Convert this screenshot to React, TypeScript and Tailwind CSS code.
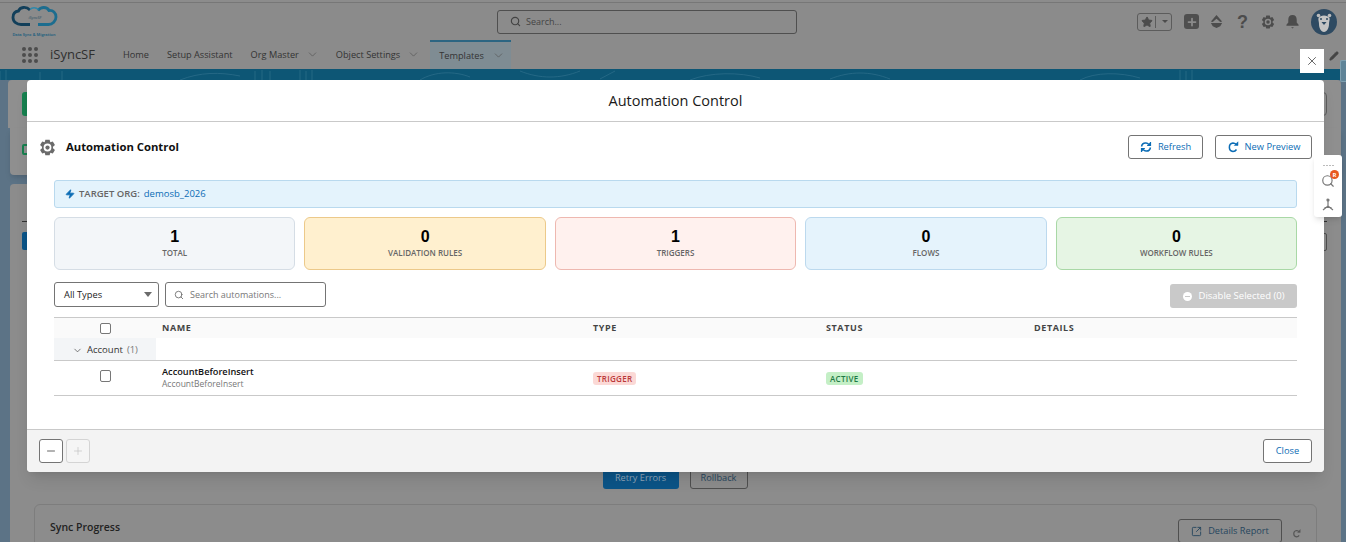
import React from 'react';
import { Search, ChevronDown, Star, X, Pencil, Zap, Minus, Plus, SquareArrowOutUpRight } from 'lucide-react';

const stats = [
  { label: 'TOTAL', val: 1, box: 'bg-[#f3f6f9] border-[#d5dde5]' },
  { label: 'VALIDATION RULES', val: 0, box: 'bg-[#fff0cf] border-[#ecc98a]' },
  { label: 'TRIGGERS', val: 1, box: 'bg-[#fff1ee] border-[#eeb8b0]' },
  { label: 'FLOWS', val: 0, box: 'bg-[#e5f3fc] border-[#bcd9ee]' },
  { label: 'WORKFLOW RULES', val: 0, box: 'bg-[#e6f5e4] border-[#a9d8a6]' },
];

const Gear = ({ className }: { className: string }) => (
  <svg viewBox="0 0 24 24" className={className} fill="currentColor">
    <path fillRule="evenodd" d="M9 1h6l1 3.500 3.500-1 3 5-2.700 2.500v2l2.700 2.500-3 5-3.500-1L15 23H9l-1-3.500-3.500 1-3-5L4.200 13v-2L1.500 8.500l3-5 3.500 1zM12 6.500a5.500 5.500 0 1 0 0 11 5.500 5.500 0 0 0 0-11z" />
    <circle cx="12" cy="12" r="3" />
  </svg>
);

const Logo = () => (
  <svg viewBox="0 0 48 33" className="h-[33px] w-[48px]" fill="none">
    <path d="M19 5C15 1 9 2 7.500 6 3.500 6.500 2 9.500 2 12.500 2 17 6 19.500 10 19.500h9" stroke="#123f5a" strokeWidth="2.800" />
    <path d="M27 5.500c3-4 9-4 11 0 4-.5 7 2.500 7 6.500s-3.500 7.500-7.500 7.500H27" stroke="#1c6d8f" strokeWidth="2.800" />
    <path d="M19 4.500c2-2.500 6-2.500 8.500 0" stroke="#2f88ab" strokeWidth="1.500" />
    <text x="24" y="14" fontSize="4" fontStyle="italic" fill="#2b4f63" textAnchor="middle">iSyncSF</text>
    <text x="23" y="30.500" fontSize="3.900" fontWeight="700" fill="#2d6480" textAnchor="middle">Data Sync &amp; Migration</text>
  </svg>
);

const Bear = () => (
  <svg viewBox="0 0 26 26" className="h-[26px] w-[26px]">
    <circle cx="13" cy="13" r="13" fill="#2e4a62" />
    <circle cx="7.500" cy="6.500" r="1.800" fill="#bdbdbd" />
    <circle cx="18.500" cy="6.500" r="1.800" fill="#bdbdbd" />
    <path d="M7.500 9c1-1.500 3-2.500 5.500-2.500S17.500 7.500 18.500 9c.5 2-.5 3.500-.5 6 0 4-2 8-5 8s-5-4-5-8c0-2.500-1-4-.5-6z" fill="#c4c4c4" />
    <circle cx="10" cy="10" r="1" fill="#2e4a62" />
    <circle cx="16" cy="10" r="1" fill="#2e4a62" />
    <path d="M10.500 13h5l-2.500 3z" fill="#2e4a62" />
  </svg>
);

const RefreshIcon = () => (
  <svg viewBox="0 0 12 12" className="h-[12px] w-[12px]" fill="none" stroke="#0b6cb5" strokeWidth="1.500">
    <path d="M1.500 5.500C2 3 4 1.800 6 2c1.200.1 2 .6 2.800 1.500" />
    <path d="M10.500 6.500C10 9 8 10.200 6 10c-1.200-.1-2-.6-2.800-1.500" />
    <path d="M10.500 1v3.500H7.200M1.500 11V7.500h3.300" strokeWidth="1.200" fill="#0b6cb5" />
  </svg>
);

const RotateIcon = () => (
  <svg viewBox="0 0 12 12" className="h-[12px] w-[12px]" fill="none" stroke="#0b6cb5" strokeWidth="1.500">
    <path d="M9.500 8.500C8.700 9.800 7.500 10.500 6 10.500A4.300 4.300 0 0 1 6 2c1.300 0 2.300.5 3.200 1.400" />
    <path d="M11 .8v3.700H7.300z" fill="#0b6cb5" strokeWidth=".5" />
  </svg>
);

const Stat = ({ label, val, box }: { label: string; val: number; box: string }) => (
  <div className={`flex h-[53px] flex-1 flex-col items-center rounded-[6px] border pt-[9px] ${box}`}>
    <div className="font-['Liberation_Sans',sans-serif] text-[16px] leading-[20px] font-bold text-black">{val}</div>
    <div className="text-[8px] leading-[12px] font-semibold text-[#666]">{label}</div>
  </div>
);

const App: React.FC = () => {
  return (
    <div className="relative h-[542px] w-full overflow-hidden bg-[#5c7386] font-['Open_Sans',sans-serif] text-[#3a3a3a]">
      {/* dimmed page behind the modal */}
      <div className="h-[3px] border-b border-[#777] bg-[#8c8c8c]" />
      <header className="flex h-[37px] items-center bg-[#8b8b8b] pr-[9px] pl-[11px]">
        <Logo />
        <div className="ml-[438px] flex h-[24px] w-[300px] items-center rounded-[3px] border border-[#4f4f4f] pl-[12px] text-[#444]">
          <Search size={11} strokeWidth={2.500} />
          <span className="ml-[5px] text-[9px]">Search...</span>
        </div>
        <div className="ml-auto flex items-center gap-[10px] text-[#4c4c4c]">
          <div className="flex h-[18px] w-[35px] items-center rounded-[3px] border border-[#5c5c5c]">
            <span className="flex w-[18px] justify-center border-r border-[#5c5c5c]"><Star size={12} fill="currentColor" /></span>
            <span className="ml-[6px] h-0 w-0 border-x-[3px] border-t-[3px] border-x-transparent border-t-[#4c4c4c]" />
          </div>
          <span className="ml-[2px] flex h-[15px] w-[15px] items-center justify-center rounded-[3px] bg-[#4f4f4f] text-[#8b8b8b]"><Plus size={12} strokeWidth={3.500} /></span>
          <svg viewBox="0 0 16 16" className="h-[15px] w-[15px]" fill="currentColor"><path d="M8 1l6 7-2 .500L8 5 4 8.500 2 8zM2 9.500h12L12 13l-4 2-4-2z" /></svg>
          <span className="ml-[3px] font-['Liberation_Sans',sans-serif] text-[18px] leading-[18px] font-bold">?</span>
          <Gear className="ml-[3px] h-[14px] w-[14px]" />
          <svg viewBox="0 0 16 16" className="h-[15px] w-[15px]" fill="currentColor"><path d="M8 1c3 0 4.500 2 4.500 5v3l2 2.500v1h-13v-1l2-2.500V6C3.500 3 5 1 8 1zM6.500 14h3L8 15.500z" /></svg>
          <span className="ml-[1px]"><Bear /></span>
        </div>
      </header>
      <nav className="flex h-[29px] items-center bg-[#8b8b8b] pl-[22px] text-[9.200px] text-[#333]">
        <div className="grid grid-cols-3 gap-[2px]">
          {Array.from({ length: 9 }).map((_, i) => (
            <span key={i} className="h-[4px] w-[4px] rounded-full bg-[#4d4d4d]" />
          ))}
        </div>
        <span className="ml-[12px] text-[13px] text-[#2f2f2f]">iSyncSF</span>
        <span className="ml-[28px]">Home</span>
        <span className="ml-[18px]">Setup Assistant</span>
        <span className="ml-[18px]">Org Master</span>
        <ChevronDown size={13} strokeWidth={1.300} className="ml-[7px] text-[#555]" />
        <span className="ml-[17px]">Object Settings</span>
        <ChevronDown size={13} strokeWidth={1.300} className="ml-[7px] text-[#555]" />
        <div className="ml-[10px] flex h-[29px] w-[81px] items-center border-t-2 border-[#2b6582] bg-[#7f8c93] pl-[9px]">
          <span>Templates</span>
          <ChevronDown size={13} strokeWidth={1.300} className="ml-[8px] text-[#555]" />
        </div>
      </nav>
      <div className="h-[11px] overflow-hidden bg-[#0d5675]">
        <svg viewBox="0 0 1346 11" className="h-[11px] w-full" fill="none" stroke="#3d7b96" strokeWidth=".7" opacity=".7">
          <path d="M0 2v9M6 1v10M40 3v8M62 2v9M180 11c20-8 40-8 60-4M255 2v9M262 1v10M270 2v9M300 1v10M306 2v9M312 1v10M420 11c15-9 35-9 50-3M520 2c20 8 40 8 60 0M600 10l15-8M690 11c20-8 50-8 70-2M830 10c20-8 40-8 60 0M1080 11c15-8 40-8 60-2M1180 1v10M1186 2v9M1192 1v10" />
        </svg>
      </div>
      <main className="flex flex-col pr-[5px] pl-[8px]">
        <div className="flex h-[48px] items-start justify-between rounded-t-[4px] bg-[#8f8f8f] pt-[12px] pr-[14px] pl-[14px]">
          <div className="h-[24px] w-[20px] rounded-[3px] bg-[#17804f]" />
          <div className="h-[24px] w-[30px] rounded-[4px] border border-[#5d5d5d]" />
        </div>
        <div className="ml-[2px] h-[47px] rounded-b-[4px] bg-[#8f8f8f] pt-[16px] pl-[12px] shadow-md">
          <div className="h-[11px] w-[8px] rounded-[2px] border-2 border-[#17804f]" />
        </div>
        <div className="mt-[9px] ml-[2px] flex h-[400px] flex-col rounded-t-[4px] bg-[#8c8c8c]">
          <div className="flex h-[285px] items-start justify-between pt-[37px] pr-[14px] pl-[12px]">
            <div className="flex flex-col gap-[10px]">
              <div className="h-px w-[8px] bg-[#333]" />
              <div className="h-[18px] w-[8px] rounded-[2px] bg-[#0b5487]" />
            </div>
            <div className="flex flex-col items-end gap-[11px]">
              <div className="h-px w-[6px] bg-[#333]" />
              <div className="h-[18px] w-[8px] rounded-[2px] border border-[#4f4f4f]" />
            </div>
          </div>
          <div className="flex justify-center gap-[11px] pr-[1px]">
            <button className="h-[20px] w-[76px] rounded-[3px] bg-[#0b5487] pb-[2px] text-[9.200px] text-[#8ea5b8]">Retry Errors</button>
            <button className="h-[20px] w-[58px] rounded-[3px] border border-[#4f4f4f] pb-[2px] text-[9.200px] text-[#26465e]">Rollback</button>
          </div>
          <div className="mt-[15px] mr-[24px] ml-[24px] flex flex-1 items-start justify-between rounded-t-[6px] border border-[#7d7d7d] pt-[14px] pr-[15px] pl-[15px]">
            <span className="mt-[1px] text-[10.500px] font-semibold text-[#222]">Sync Progress</span>
            <div className="flex items-center gap-[10px]">
              <button className="flex h-[24px] w-[104px] items-center justify-center gap-[6px] rounded-[3px] border border-[#4f4f4f] text-[9.200px] text-[#26465e]">
                <SquareArrowOutUpRight size={11} /> Details Report
              </button>
              <svg viewBox="0 0 12 12" className="mt-[4px] h-[9px] w-[9px]" fill="none" stroke="#555" strokeWidth="1.500">
                <path d="M9.500 8.500C8.700 9.800 7.500 10.500 6 10.500A4.300 4.300 0 0 1 6 2c1.300 0 2.300.5 3.200 1.400" />
                <path d="M11 .8v3.700H7.300z" fill="#555" strokeWidth=".5" />
              </svg>
            </div>
          </div>
        </div>
      </main>
      <Pencil size={10} fill="currentColor" className="absolute top-[51px] left-[1329px] text-[#444]" />
      <div className="absolute top-[60px] left-[1340px] h-[22px] w-[6px] rounded-l-[2px] border border-r-0 border-[#7fa0b0] bg-[#5f8498]" />

      {/* modal */}
      <button className="absolute top-[49px] left-[1300px] flex h-[24px] w-[24px] items-center justify-center bg-white text-[#555]">
        <X size={14} strokeWidth={1.500} />
      </button>
      <section className="absolute top-[80px] left-[27px] flex h-[392px] w-[1297px] flex-col overflow-hidden rounded-[4px] bg-white shadow-lg">
        <div className="flex h-[42px] shrink-0 items-center justify-center border-b border-[#c9c9c9] text-[14.500px] text-[#1a1a1a]">Automation Control</div>
        <div className="flex-1 pr-[27px] pl-[27px]">
          <div className="-mr-[15px] -ml-[14px] flex h-[58px] items-center justify-between pb-[8px]">
            <div className="flex items-center gap-[10px]">
              <Gear className="-ml-px h-[17px] w-[17px] text-[#6b6b6b]" />
              <span className="text-[11.300px] font-bold text-[#111]">Automation Control</span>
            </div>
            <div className="flex gap-[12px]">
              <button className="flex h-[24px] w-[75px] items-center justify-center gap-[6px] rounded-[3px] border border-[#747474] text-[9.300px] text-[#0b6cb5]">
                <RefreshIcon /> Refresh
              </button>
              <button className="flex h-[24px] w-[97px] items-center justify-center gap-[6px] rounded-[3px] border border-[#747474] text-[9.300px] text-[#0b6cb5]">
                <RotateIcon /> New Preview
              </button>
            </div>
          </div>
          <div className="flex h-[28px] items-center rounded-[3px] border border-[#b9d9ee] bg-[#e4f3fc] pl-[10px] text-[9.500px]">
            <Zap size={10} fill="#0b6cb5" className="text-[#0b6cb5]" />
            <span className="ml-[4px] font-semibold text-[#666]">TARGET ORG:</span>
            <span className="ml-[4px] text-[#0b6cb5]">demosb_2026</span>
          </div>
          <div className="mt-[9px] flex gap-[9px]">
            {stats.map((s) => (
              <Stat key={s.label} {...s} />
            ))}
          </div>
          <div className="mt-[12px] flex items-start">
            <div className="flex h-[25px] w-[105px] items-center justify-between rounded-[3px] border border-[#747474] pr-[6px] pl-[9px] text-[9.300px] text-[#222]">
              All Types
              <span className="h-0 w-0 border-x-[4px] border-t-[5px] border-x-transparent border-t-[#6b6b6b]" />
            </div>
            <div className="ml-[6px] flex h-[25px] w-[161px] items-center rounded-[3px] border border-[#747474] pl-[8px] text-[9px] text-[#777]">
              <Search size={10} className="text-[#666]" />
              <span className="ml-[6px]">Search automations...</span>
            </div>
            <button className="mt-[2px] ml-auto flex h-[24px] w-[127px] items-center justify-center gap-[7px] rounded-[3px] bg-[#c9c9c9] pt-[1px] text-[9.500px] text-white">
              <span className="flex h-[9px] w-[9px] items-center justify-center rounded-full bg-white"><span className="h-[1.500px] w-[5px] bg-[#c9c9c9]" /></span>
              Disable Selected (0)
            </button>
          </div>
          <div className="mt-[9px] grid grid-cols-[102px_6px_431px_233px_208px_1fr] text-[9px]">
            <div className="flex h-[21px] items-center justify-center border-t border-[#c9c9c9] bg-[#fafafa]">
              <span className="h-[11px] w-[11px] rounded-[2px] border border-[#777] bg-white" />
            </div>
            <div className="border-t border-[#c9c9c9] bg-[#fafafa]" />
            <div className="flex items-center border-t border-[#c9c9c9] bg-[#fafafa] font-bold tracking-[0.6px] text-[#444]">NAME</div>
            <div className="flex items-center border-t border-[#c9c9c9] bg-[#fafafa] font-bold tracking-[0.6px] text-[#444]">TYPE</div>
            <div className="flex items-center border-t border-[#c9c9c9] bg-[#fafafa] font-bold tracking-[0.6px] text-[#444]">STATUS</div>
            <div className="flex items-center border-t border-[#c9c9c9] bg-[#fafafa] font-bold tracking-[0.6px] text-[#444]">DETAILS</div>

            <div className="col-span-6 grid h-[23px] grid-cols-[102px_1fr] border-b border-[#c9c9c9]">
              <div className="flex items-center bg-[#f3f5f7] pt-[2px] pl-[18px] text-[9.500px] text-[#333]">
                <ChevronDown size={11} strokeWidth={1.500} className="text-[#444]" />
                <span className="ml-[4px]">Account</span>
                <span className="ml-[4px] text-[#777]">(1)</span>
              </div>
              <div />
            </div>

            <div className="col-span-6 grid h-[35px] grid-cols-[102px_6px_431px_233px_208px_1fr] border-b border-[#c9c9c9]">
              <div className="flex justify-center pt-[9px]">
                <span className="h-[12px] w-[11px] rounded-[2px] border border-[#777] bg-white" />
              </div>
              <div />
              <div className="pt-[4px]">
                <div className="text-[9.200px] leading-[13px] font-semibold text-[#111]">AccountBeforeInsert</div>
                <div className="text-[8.500px] leading-[12px] text-[#777]">AccountBeforeInsert</div>
              </div>
              <div className="pt-[11px]">
                <span className="inline-block rounded-[3px] bg-[#fbd9d6] px-[4px] text-[8px] leading-[13px] font-semibold tracking-[0.3px] text-[#bb3a3a]">TRIGGER</span>
              </div>
              <div className="pt-[11px]">
                <span className="inline-block rounded-[3px] bg-[#c4efc6] px-[4px] text-[8px] leading-[13px] font-semibold tracking-[0.3px] text-[#1f7a45]">ACTIVE</span>
              </div>
              <div />
            </div>
          </div>
        </div>
        <footer className="flex h-[43px] shrink-0 items-center gap-[3px] border-t border-[#c9c9c9] bg-[#f3f3f3] pr-[12px] pl-[12px]">
          <button className="flex h-[24px] w-[24px] items-center justify-center rounded-[3px] border border-[#747474] bg-white text-[#666]"><Minus size={12} /></button>
          <button className="flex h-[24px] w-[24px] items-center justify-center rounded-[3px] border border-[#d4d4d4] bg-[#f5f5f5] text-[#c4c4c4]"><Plus size={12} strokeWidth={1.500} /></button>
          <button className="ml-auto h-[24px] w-[49px] rounded-[3px] border border-[#747474] bg-white text-[9.300px] text-[#0b6cb5]">Close</button>
        </footer>
      </section>

      {/* floating utility bar */}
      <aside className="absolute top-[155px] left-[1314px] flex h-[62px] w-[28px] flex-col items-center rounded-[3px] bg-white pt-[10px] shadow-md">
        <div className="flex gap-[1px]">
          {[0, 1, 2, 3].map((i) => (
            <span key={i} className="h-[1px] w-[2px] bg-[#bbb]" />
          ))}
        </div>
        <div className="relative mt-[8px] text-[#777]">
          <Search size={14} strokeWidth={2} />
          <span className="absolute -top-[4px] -right-[4px] flex h-[9px] w-[9px] items-center justify-center rounded-full bg-[#e8591f] text-[6px] leading-none font-bold text-white">R</span>
        </div>
        <svg viewBox="0 0 14 14" className="mt-[10px] h-[14px] w-[14px] text-[#777]" fill="none" stroke="currentColor" strokeWidth="1.200">
          <circle cx="7" cy="2" r="1" fill="currentColor" />
          <path d="M7 3v5M7 8L2 12M7 8l5 4M3.500 9.500h7" />
        </svg>
      </aside>
    </div>
  );
};

export default App;
